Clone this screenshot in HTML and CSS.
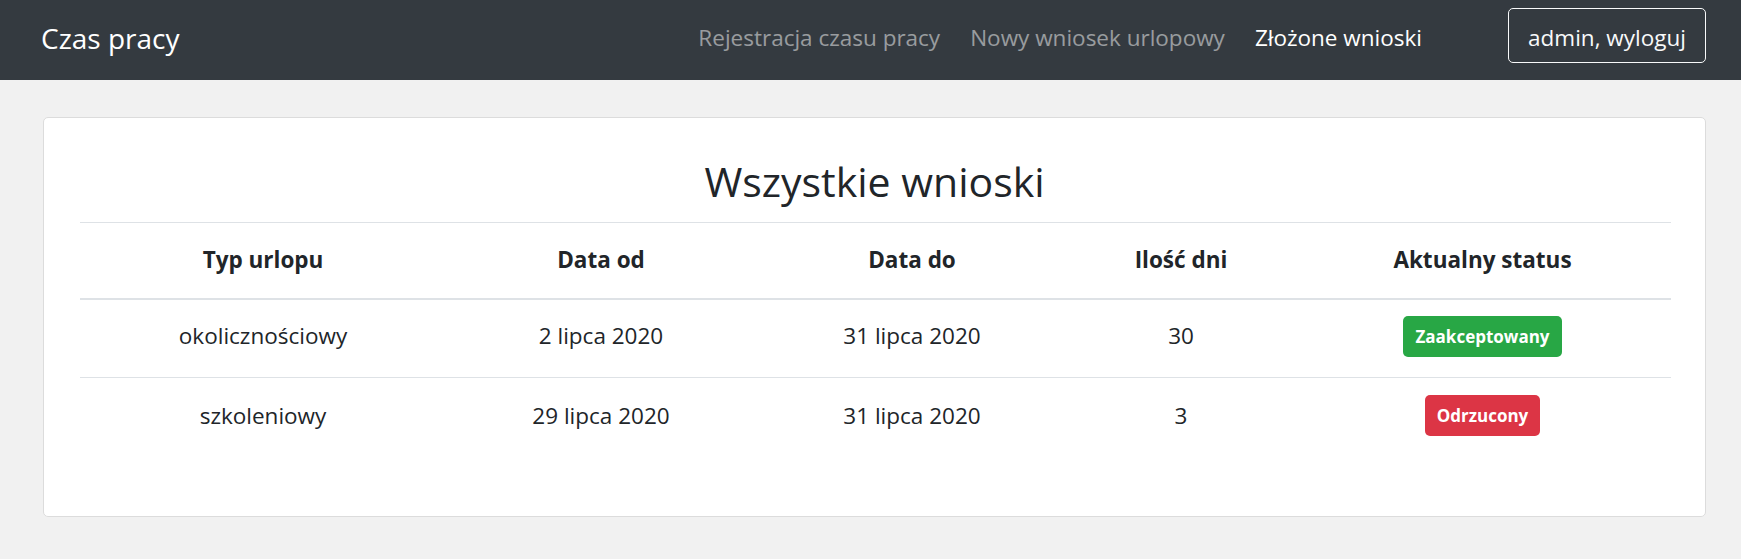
FILE: index.html
```html
<!DOCTYPE html>
<html lang="pl">
<head>
<meta charset="utf-8">
<title>Czas pracy</title>
<link rel="stylesheet" href="styles.css">
</head>
<body>
<nav class="navbar">
  <a class="brand" href="#">Czas pracy</a>
  <ul class="nav">
    <li><a class="nav-link" href="#">Rejestracja czasu pracy</a></li>
    <li><a class="nav-link" href="#">Nowy wniosek urlopowy</a></li>
    <li><a class="nav-link active" href="#">Złożone wnioski</a></li>
  </ul>
  <button class="logout" type="button">admin, wyloguj</button>
</nav>
<main class="card">
  <h1 class="title">Wszystkie wnioski</h1>
  <table class="table">
    <colgroup>
      <col class="c1"><col class="c2"><col class="c3"><col class="c4"><col class="c5">
    </colgroup>
    <thead>
      <tr><th>Typ urlopu</th><th>Data od</th><th>Data do</th><th>Ilość dni</th><th>Aktualny status</th></tr>
    </thead>
    <tbody>
      <tr><td>okolicznościowy</td><td>2 lipca 2020</td><td>31 lipca 2020</td><td>30</td><td><span class="badge ok">Zaakceptowany</span></td></tr>
      <tr><td>szkoleniowy</td><td>29 lipca 2020</td><td>31 lipca 2020</td><td>3</td><td><span class="badge no">Odrzucony</span></td></tr>
    </tbody>
  </table>
</main>
</body>
</html>
```
FILE: styles.css
```css
* { box-sizing: border-box; }
html, body { margin: 0; padding: 0; }
body {
  background: #f1f1f1;
  color: #212529;
  font-family: "Open Sans", "Noto Sans", sans-serif;
  font-size: 22.5px;
  line-height: 1.5;
}
.navbar {
  display: flex;
  align-items: flex-start;
  height: 80px;
  background: #343a40;
  padding: 0 35px 0 41px;
}
.brand {
  color: #fff;
  text-decoration: none;
  font-size: 28px;
  line-height: 36px;
  margin-top: 20px;
}
.nav {
  display: flex;
  list-style: none;
  margin: 0 0 0 auto;
  padding: 0;
}
.nav-link {
  display: block;
  color: rgba(255,255,255,.5);
  text-decoration: none;
  font-size: 22.5px;
  line-height: 30px;
  padding: 0 15px;
  margin-top: 23px;
}
.nav-link.active { color: #fff; }
.logout {
  margin: 8px 0 0 71px;
  height: 55px;
  width: 198px;
  background: transparent;
  color: #f8f9fa;
  border: 1px solid #f8f9fa;
  border-radius: 5px;
  font-family: inherit;
  font-size: 22.5px;
  line-height: 30px;
  padding: 5px 0 0;
}
.card {
  display: block;
  margin: 37px 35px 0 43px;
  background: #fff;
  border: 1px solid #dcdcdc;
  border-radius: 5px;
  padding: 36px 36px 38px;
}
.title {
  margin: 0 0 14px;
  text-align: center;
  font-size: 41px;
  font-weight: 500;
  line-height: 54px;
}
.table {
  width: 100%;
  border-collapse: collapse;
  table-layout: fixed;
  margin-bottom: 20px;
}
.c1 { width: 366px; }
.c2 { width: 310px; }
.c3 { width: 312px; }
.c4 { width: 226px; }
.c5 { width: 377px; }
.table th {
  font-weight: 700;
  border-top: 1px solid #dee2e6;
  border-bottom: 2px solid #dee2e6;
  height: 76px;
  padding: 0 12px;
  text-align: center;
  vertical-align: middle;
}
.table td {
  height: 79px;
  padding: 0 12px 4px;
  text-align: center;
  vertical-align: middle;
}
.table tbody tr + tr td { border-top: 1px solid #dee2e6; height: 80px; }
.badge {
  display: inline-block;
  color: #fff;
  font-weight: 700;
  font-size: 17px;
  height: 41px;
  line-height: 41px;
  padding: 0 12px;
  border-radius: 5px;
  vertical-align: middle;
}
.badge.ok { background: #28a745; }
.badge.no { background: #dc3545; }
```
